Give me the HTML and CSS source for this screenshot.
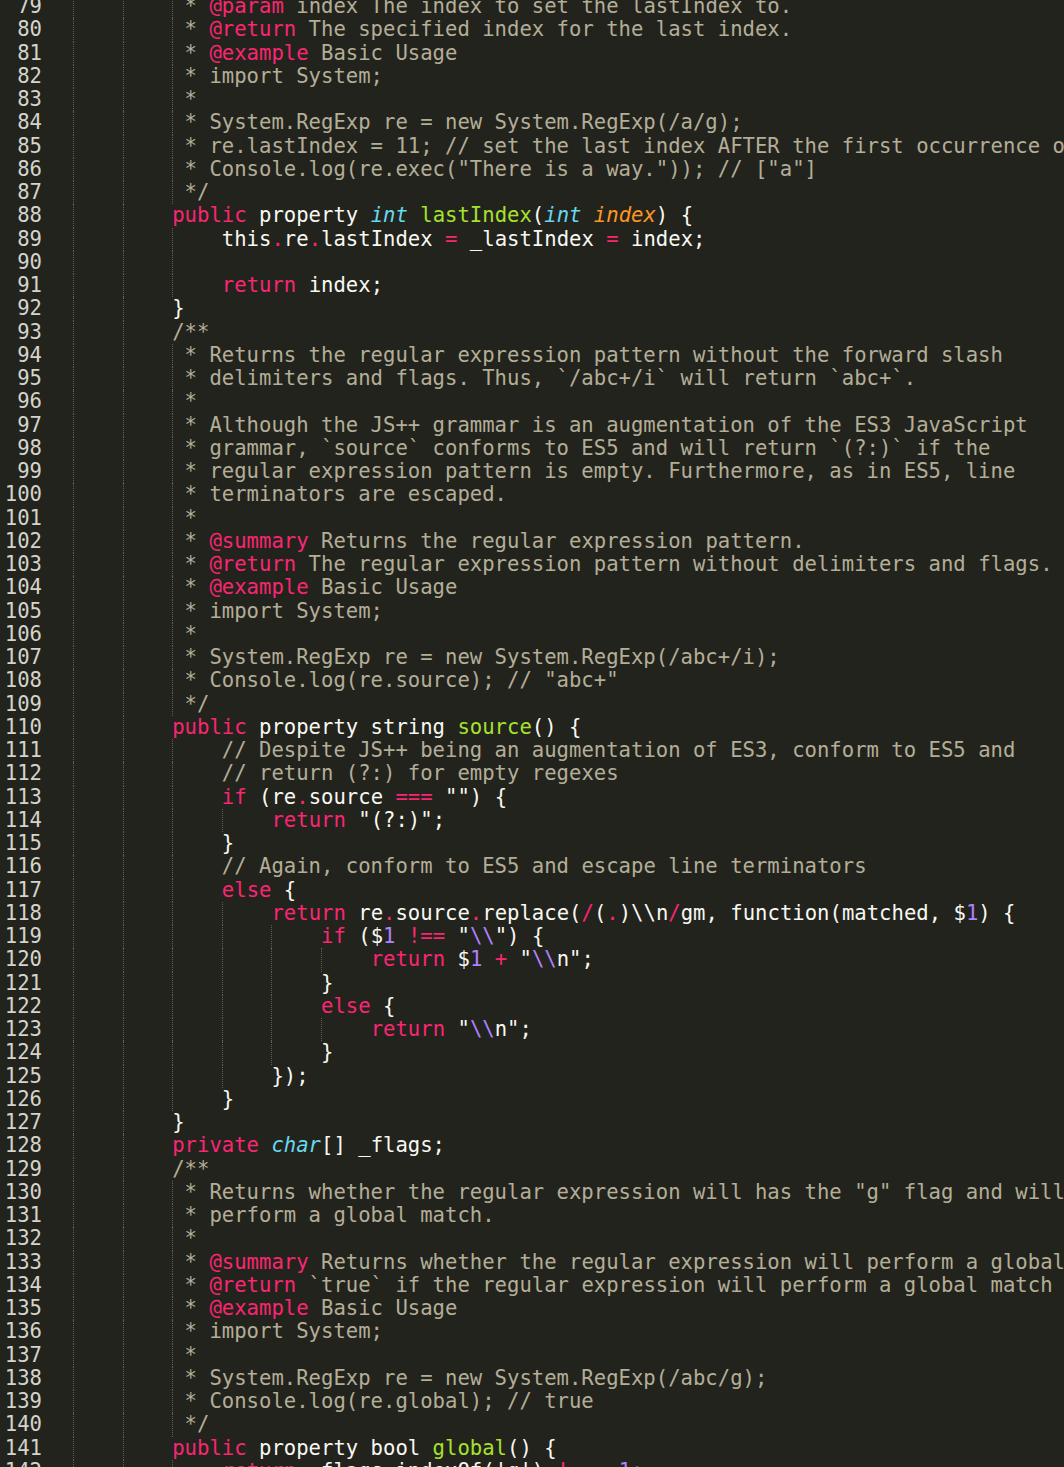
FILE: index.html
```html
<!DOCTYPE html>
<html lang="en">
<head>
<meta charset="UTF-8">
<title>RegExp.jspp</title>
<link rel="stylesheet" href="styles.css">
</head>
<body>
<div class="editor">
<div class="line"><span class="num">79</span><span class="code"><i class="g"></i>    <i class="g"></i>    <i class="g"></i><span class="c"> * <b>@param</b> index The index to set the lastIndex to.</span></span></div>
<div class="line"><span class="num">80</span><span class="code"><i class="g"></i>    <i class="g"></i>    <i class="g"></i><span class="c"> * <b>@return</b> The specified index for the last index.</span></span></div>
<div class="line"><span class="num">81</span><span class="code"><i class="g"></i>    <i class="g"></i>    <i class="g"></i><span class="c"> * <b>@example</b> Basic Usage</span></span></div>
<div class="line"><span class="num">82</span><span class="code"><i class="g"></i>    <i class="g"></i>    <i class="g"></i><span class="c"> * import System;</span></span></div>
<div class="line"><span class="num">83</span><span class="code"><i class="g"></i>    <i class="g"></i>    <i class="g"></i><span class="c"> *</span></span></div>
<div class="line"><span class="num">84</span><span class="code"><i class="g"></i>    <i class="g"></i>    <i class="g"></i><span class="c"> * System.RegExp re = new System.RegExp(/a/g);</span></span></div>
<div class="line"><span class="num">85</span><span class="code"><i class="g"></i>    <i class="g"></i>    <i class="g"></i><span class="c"> * re.lastIndex = 11; // set the last index AFTER the first occurrence of "a"</span></span></div>
<div class="line"><span class="num">86</span><span class="code"><i class="g"></i>    <i class="g"></i>    <i class="g"></i><span class="c"> * Console.log(re.exec("There is a way.")); // ["a"]</span></span></div>
<div class="line"><span class="num">87</span><span class="code"><i class="g"></i>    <i class="g"></i>    <i class="g"></i><span class="c"> */</span></span></div>
<div class="line"><span class="num">88</span><span class="code"><i class="g"></i>    <i class="g"></i>    <span class="k">public</span> property <span class="t">int</span> <span class="f">lastIndex</span>(<span class="t">int</span> <span class="p">index</span>) {</span></div>
<div class="line"><span class="num">89</span><span class="code"><i class="g"></i>    <i class="g"></i>    <i class="g"></i>    this<span class="k">.</span>re<span class="k">.</span>lastIndex <span class="k">=</span> _lastIndex <span class="k">=</span> index;</span></div>
<div class="line"><span class="num">90</span><span class="code"><i class="g"></i>    <i class="g"></i>    <i class="g"></i></span></div>
<div class="line"><span class="num">91</span><span class="code"><i class="g"></i>    <i class="g"></i>    <i class="g"></i>    <span class="k">return</span> index;</span></div>
<div class="line"><span class="num">92</span><span class="code"><i class="g"></i>    <i class="g"></i>    }</span></div>
<div class="line"><span class="num">93</span><span class="code"><i class="g"></i>    <i class="g"></i>    <span class="c">/**</span></span></div>
<div class="line"><span class="num">94</span><span class="code"><i class="g"></i>    <i class="g"></i>    <i class="g"></i><span class="c"> * Returns the regular expression pattern without the forward slash</span></span></div>
<div class="line"><span class="num">95</span><span class="code"><i class="g"></i>    <i class="g"></i>    <i class="g"></i><span class="c"> * delimiters and flags. Thus, `/abc+/i` will return `abc+`.</span></span></div>
<div class="line"><span class="num">96</span><span class="code"><i class="g"></i>    <i class="g"></i>    <i class="g"></i><span class="c"> *</span></span></div>
<div class="line"><span class="num">97</span><span class="code"><i class="g"></i>    <i class="g"></i>    <i class="g"></i><span class="c"> * Although the JS++ grammar is an augmentation of the ES3 JavaScript</span></span></div>
<div class="line"><span class="num">98</span><span class="code"><i class="g"></i>    <i class="g"></i>    <i class="g"></i><span class="c"> * grammar, `source` conforms to ES5 and will return `(?:)` if the</span></span></div>
<div class="line"><span class="num">99</span><span class="code"><i class="g"></i>    <i class="g"></i>    <i class="g"></i><span class="c"> * regular expression pattern is empty. Furthermore, as in ES5, line</span></span></div>
<div class="line"><span class="num">100</span><span class="code"><i class="g"></i>    <i class="g"></i>    <i class="g"></i><span class="c"> * terminators are escaped.</span></span></div>
<div class="line"><span class="num">101</span><span class="code"><i class="g"></i>    <i class="g"></i>    <i class="g"></i><span class="c"> *</span></span></div>
<div class="line"><span class="num">102</span><span class="code"><i class="g"></i>    <i class="g"></i>    <i class="g"></i><span class="c"> * <b>@summary</b> Returns the regular expression pattern.</span></span></div>
<div class="line"><span class="num">103</span><span class="code"><i class="g"></i>    <i class="g"></i>    <i class="g"></i><span class="c"> * <b>@return</b> The regular expression pattern without delimiters and flags.</span></span></div>
<div class="line"><span class="num">104</span><span class="code"><i class="g"></i>    <i class="g"></i>    <i class="g"></i><span class="c"> * <b>@example</b> Basic Usage</span></span></div>
<div class="line"><span class="num">105</span><span class="code"><i class="g"></i>    <i class="g"></i>    <i class="g"></i><span class="c"> * import System;</span></span></div>
<div class="line"><span class="num">106</span><span class="code"><i class="g"></i>    <i class="g"></i>    <i class="g"></i><span class="c"> *</span></span></div>
<div class="line"><span class="num">107</span><span class="code"><i class="g"></i>    <i class="g"></i>    <i class="g"></i><span class="c"> * System.RegExp re = new System.RegExp(/abc+/i);</span></span></div>
<div class="line"><span class="num">108</span><span class="code"><i class="g"></i>    <i class="g"></i>    <i class="g"></i><span class="c"> * Console.log(re.source); // "abc+"</span></span></div>
<div class="line"><span class="num">109</span><span class="code"><i class="g"></i>    <i class="g"></i>    <i class="g"></i><span class="c"> */</span></span></div>
<div class="line"><span class="num">110</span><span class="code"><i class="g"></i>    <i class="g"></i>    <span class="k">public</span> property string <span class="f">source</span>() {</span></div>
<div class="line"><span class="num">111</span><span class="code"><i class="g"></i>    <i class="g"></i>    <i class="g"></i>    <span class="c">// Despite JS++ being an augmentation of ES3, conform to ES5 and</span></span></div>
<div class="line"><span class="num">112</span><span class="code"><i class="g"></i>    <i class="g"></i>    <i class="g"></i>    <span class="c">// return (?:) for empty regexes</span></span></div>
<div class="line"><span class="num">113</span><span class="code"><i class="g"></i>    <i class="g"></i>    <i class="g"></i>    <span class="k">if</span> (re<span class="k">.</span>source <span class="k">===</span> "") {</span></div>
<div class="line"><span class="num">114</span><span class="code"><i class="g"></i>    <i class="g"></i>    <i class="g"></i>    <i class="g"></i>    <span class="k">return</span> "(?:)";</span></div>
<div class="line"><span class="num">115</span><span class="code"><i class="g"></i>    <i class="g"></i>    <i class="g"></i>    }</span></div>
<div class="line"><span class="num">116</span><span class="code"><i class="g"></i>    <i class="g"></i>    <i class="g"></i>    <span class="c">// Again, conform to ES5 and escape line terminators</span></span></div>
<div class="line"><span class="num">117</span><span class="code"><i class="g"></i>    <i class="g"></i>    <i class="g"></i>    <span class="k">else</span> {</span></div>
<div class="line"><span class="num">118</span><span class="code"><i class="g"></i>    <i class="g"></i>    <i class="g"></i>    <i class="g"></i>    <span class="k">return</span> re<span class="k">.</span>source<span class="k">.</span>replace(<span class="k">/</span>(<span class="k">.</span>)\\n<span class="k">/</span>gm, function(matched, $<span class="n">1</span>) {</span></div>
<div class="line"><span class="num">119</span><span class="code"><i class="g"></i>    <i class="g"></i>    <i class="g"></i>    <i class="g"></i>    <i class="g"></i>    <span class="k">if</span> ($<span class="n">1</span> <span class="k">!==</span> "<span class="e">\\</span>") {</span></div>
<div class="line"><span class="num">120</span><span class="code"><i class="g"></i>    <i class="g"></i>    <i class="g"></i>    <i class="g"></i>    <i class="g"></i>    <i class="g"></i>    <span class="k">return</span> $<span class="n">1</span> <span class="k">+</span> "<span class="e">\\</span>n";</span></div>
<div class="line"><span class="num">121</span><span class="code"><i class="g"></i>    <i class="g"></i>    <i class="g"></i>    <i class="g"></i>    <i class="g"></i>    }</span></div>
<div class="line"><span class="num">122</span><span class="code"><i class="g"></i>    <i class="g"></i>    <i class="g"></i>    <i class="g"></i>    <i class="g"></i>    <span class="k">else</span> {</span></div>
<div class="line"><span class="num">123</span><span class="code"><i class="g"></i>    <i class="g"></i>    <i class="g"></i>    <i class="g"></i>    <i class="g"></i>    <i class="g"></i>    <span class="k">return</span> "<span class="e">\\</span>n";</span></div>
<div class="line"><span class="num">124</span><span class="code"><i class="g"></i>    <i class="g"></i>    <i class="g"></i>    <i class="g"></i>    <i class="g"></i>    }</span></div>
<div class="line"><span class="num">125</span><span class="code"><i class="g"></i>    <i class="g"></i>    <i class="g"></i>    <i class="g"></i>    });</span></div>
<div class="line"><span class="num">126</span><span class="code"><i class="g"></i>    <i class="g"></i>    <i class="g"></i>    }</span></div>
<div class="line"><span class="num">127</span><span class="code"><i class="g"></i>    <i class="g"></i>    }</span></div>
<div class="line"><span class="num">128</span><span class="code"><i class="g"></i>    <i class="g"></i>    <span class="k">private</span> <span class="t">char</span>[] _flags;</span></div>
<div class="line"><span class="num">129</span><span class="code"><i class="g"></i>    <i class="g"></i>    <span class="c">/**</span></span></div>
<div class="line"><span class="num">130</span><span class="code"><i class="g"></i>    <i class="g"></i>    <i class="g"></i><span class="c"> * Returns whether the regular expression will has the "g" flag and will</span></span></div>
<div class="line"><span class="num">131</span><span class="code"><i class="g"></i>    <i class="g"></i>    <i class="g"></i><span class="c"> * perform a global match.</span></span></div>
<div class="line"><span class="num">132</span><span class="code"><i class="g"></i>    <i class="g"></i>    <i class="g"></i><span class="c"> *</span></span></div>
<div class="line"><span class="num">133</span><span class="code"><i class="g"></i>    <i class="g"></i>    <i class="g"></i><span class="c"> * <b>@summary</b> Returns whether the regular expression will perform a global</span></span></div>
<div class="line"><span class="num">134</span><span class="code"><i class="g"></i>    <i class="g"></i>    <i class="g"></i><span class="c"> * <b>@return</b> `true` if the regular expression will perform a global match</span></span></div>
<div class="line"><span class="num">135</span><span class="code"><i class="g"></i>    <i class="g"></i>    <i class="g"></i><span class="c"> * <b>@example</b> Basic Usage</span></span></div>
<div class="line"><span class="num">136</span><span class="code"><i class="g"></i>    <i class="g"></i>    <i class="g"></i><span class="c"> * import System;</span></span></div>
<div class="line"><span class="num">137</span><span class="code"><i class="g"></i>    <i class="g"></i>    <i class="g"></i><span class="c"> *</span></span></div>
<div class="line"><span class="num">138</span><span class="code"><i class="g"></i>    <i class="g"></i>    <i class="g"></i><span class="c"> * System.RegExp re = new System.RegExp(/abc/g);</span></span></div>
<div class="line"><span class="num">139</span><span class="code"><i class="g"></i>    <i class="g"></i>    <i class="g"></i><span class="c"> * Console.log(re.global); // true</span></span></div>
<div class="line"><span class="num">140</span><span class="code"><i class="g"></i>    <i class="g"></i>    <i class="g"></i><span class="c"> */</span></span></div>
<div class="line"><span class="num">141</span><span class="code"><i class="g"></i>    <i class="g"></i>    <span class="k">public</span> property bool <span class="f">global</span>() {</span></div>
<div class="line"><span class="num">142</span><span class="code"><i class="g"></i>    <i class="g"></i>    <i class="g"></i>    <span class="k">return</span> _flags<span class="k">.</span>indexOf('g') <span class="k">!==</span> <span class="k">-</span><span class="n">1</span>;</span></div>
</div>
</body>
</html>
```

FILE: styles.css
```css
html, body {
    margin: 0;
    padding: 0;
    height: 100%;
    overflow: hidden;
    background-color: #23231d;
}

.editor {
    margin-top: -5px; /* view is scrolled, line 79 is cut at the top */
    font-family: "DejaVu Sans Mono", "Liberation Mono", monospace;
    font-size: 20.6px;
    color: #f8f8f2;
}

.line {
    display: flex;
    height: 23.26px;
    line-height: 23.26px;
    white-space: pre;
}

.num {
    flex: none;
    width: 42px;
    text-align: right;
    color: #d4d4cc;
}

.code {
    flex: none;
    padding-left: 31px;
}

/* indent guides */
.g {
    display: inline-block;
    width: 0;
    height: 23.26px;
    margin-right: -1px;
    vertical-align: top;
    border-left: 1px dotted #5e5e52;
}

.k { color: #f92672; }
.t { color: #66d9ef; font-style: italic; }
.f { color: #a6e22e; }
.p { color: #fd971f; font-style: italic; }
.n { color: #ae81ff; }
.e { color: #ae81ff; }

.c { color: #b3ae98; }
.c b {
    font-weight: normal;
    color: #f92672;
}
```
